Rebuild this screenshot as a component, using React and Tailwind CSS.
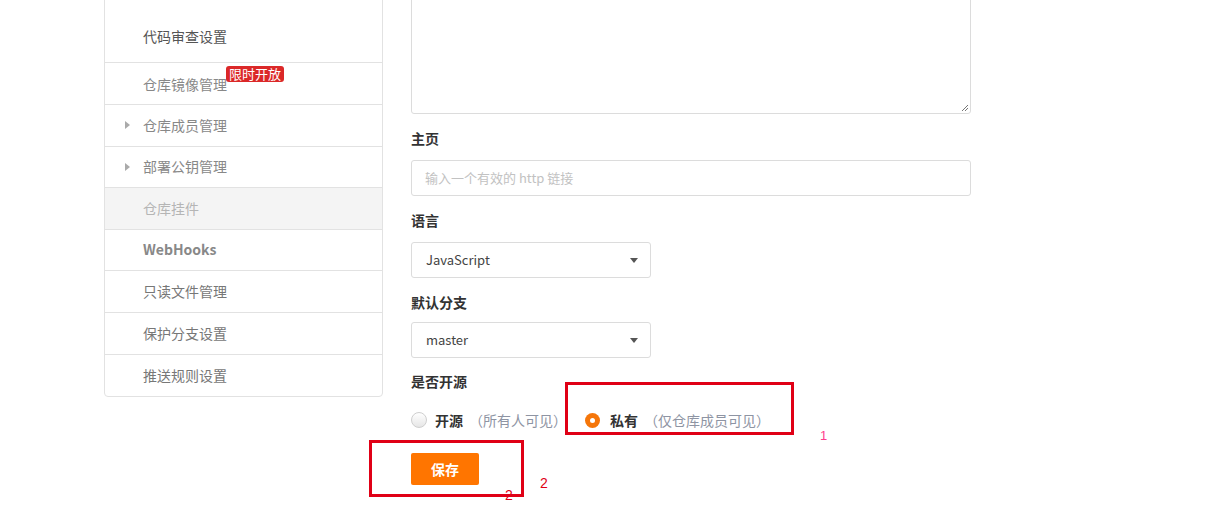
import React from 'react';

const menu = [
  { label: '代码审查设置', h: 'h-[42px]', text: 'text-[#555]' },
  { label: '仓库镜像管理', h: 'h-[42px]', text: 'text-[#888]', badge: '限时开放' },
  { label: '仓库成员管理', h: 'h-[42px]', text: 'text-[#888]', arrow: true },
  { label: '部署公钥管理', h: 'h-[41px]', text: 'text-[#888]', arrow: true },
  { label: '仓库挂件', h: 'h-[42px]', text: 'text-[#b5b5b5]', active: true },
  { label: 'WebHooks', h: 'h-[41px]', text: 'text-[#888] font-bold' },
  { label: '只读文件管理', h: 'h-[42px]', text: 'text-[#777]' },
  { label: '保护分支设置', h: 'h-[42px]', text: 'text-[#777]' },
  { label: '推送规则设置', h: 'h-[41px]', text: 'text-[#777]' },
];

const Caret = () => (
  <span className="w-0 h-0 border-l-[4px] border-r-[4px] border-t-[5px] border-l-transparent border-r-transparent border-t-[#555]" />
);

const Select = ({ value }) => (
  <div className="w-[240px] h-[36px] border border-[#dcdcdc] rounded-[3px] flex items-center justify-between pl-[14px] pr-[12px] text-[13px] text-[#444]">
    <span>{value}</span>
    <Caret />
  </div>
);

const Label = ({ children, className = '' }) => (
  <div className={`text-[14px] leading-[20px] font-bold text-[#333] ${className}`}>{children}</div>
);

export default function App() {
  return (
    <div
      className="relative w-[1206px] h-[512px] overflow-hidden bg-white flex"
      style={{ fontFamily: '"Noto Sans CJK SC", "Open Sans", sans-serif' }}
    >
      {/* Sidebar */}
      <div className="ml-[104px] w-[279px] self-start -mt-[22px] border border-[#e2e2e2] rounded-b-[4px] bg-white">
        {menu.map((item, i) => (
          <div
            key={item.label}
            className={`relative flex items-center pl-[38px] ${i === 0 ? 'h-[84px] pt-[32px]' : item.h} ${
              i < menu.length - 1 ? 'border-b border-[#e2e2e2]' : ''
            } ${item.active ? 'bg-[#f4f4f4]' : ''}`}
          >
            {item.arrow && (
              <span className="absolute left-[20px] top-[16px] w-0 h-0 border-t-[4px] border-b-[4px] border-l-[5px] border-t-transparent border-b-transparent border-l-[#aaa]" />
            )}
            <span className={`text-[14px] -mt-[1px] ${item.text} ${item.badge ? 'mt-[1px]' : ''}`}>{item.label}</span>
            {item.badge && (
              <span className="absolute left-[121px] top-[3px] bg-[#db2828] text-white text-[13px] leading-[16px] px-[3px] rounded-[3px]">
                {item.badge}
              </span>
            )}
          </div>
        ))}
      </div>

      {/* Form */}
      <div className="ml-[28px] w-[560px] flex flex-col">
        <div className="-mt-[50px] h-[164px] border border-[#dcdcdc] rounded-[3px] relative">
          <svg className="absolute right-[1px] bottom-[1px]" width="9" height="9" viewBox="0 0 9 9">
            <path d="M8 2 L2 8 M8 5 L5 8" stroke="#777" strokeWidth="1" />
          </svg>
        </div>
        <Label className="mt-[14px]">主页</Label>
        <div className="mt-[12px] h-[36px] border border-[#dcdcdc] rounded-[3px] flex items-center pl-[13px] text-[13px] text-[#c2c2c2]">
          输入一个有效的 http 链接
        </div>
        <Label className="mt-[14px]">语言</Label>
        <div className="mt-[12px]">
          <Select value="JavaScript" />
        </div>
        <Label className="mt-[14px]">默认分支</Label>
        <div className="mt-[10px]">
          <Select value="master" />
        </div>
        <Label className="mt-[13px]">是否开源</Label>
        <div className="mt-[19px] flex items-center text-[14px] leading-[20px]">
          <span className="w-[16px] h-[16px] rounded-full border border-[#cfcfcf] bg-gradient-to-b from-white to-[#e6e6e6]" />
          <span className="ml-[8px] font-bold text-[#333]">开源</span>
          <span className="ml-[6px] text-[#8e94a3]">（所有人可见）</span>
          <span className="ml-[18px] w-[15px] h-[15px] rounded-full bg-[#f5760a] flex items-center justify-center">
            <span className="w-[5px] h-[5px] rounded-full bg-white" />
          </span>
          <span className="ml-[10px] font-bold text-[#333]">私有</span>
          <span className="ml-[6px] text-[#8e94a3]">（仅仓库成员可见）</span>
        </div>
        <button className="mt-[23px] w-[68px] h-[32px] rounded-[2px] bg-[#ff7500] text-white text-[14px] font-bold">
          保存
        </button>
      </div>

      {/* Annotations */}
      <div className="absolute left-[565px] top-[382px] w-[229px] h-[53px] border-[3px] border-[#e00016]" />
      <div className="absolute left-[369px] top-[440px] w-[155px] h-[57px] border-[3px] border-[#e00016]" />
      <span className="absolute left-[820px] top-[426px] text-[13px] text-[#ff3c8c]" style={{ fontFamily: '"Liberation Sans", sans-serif' }}>1</span>
      <span className="absolute left-[540px] top-[473px] text-[14px] text-[#e00016]" style={{ fontFamily: '"Liberation Sans", sans-serif' }}>2</span>
      <span className="absolute left-[505px] top-[485px] text-[14px] text-[#e00016]" style={{ fontFamily: '"Liberation Sans", sans-serif' }}>2</span>
    </div>
  );
}
